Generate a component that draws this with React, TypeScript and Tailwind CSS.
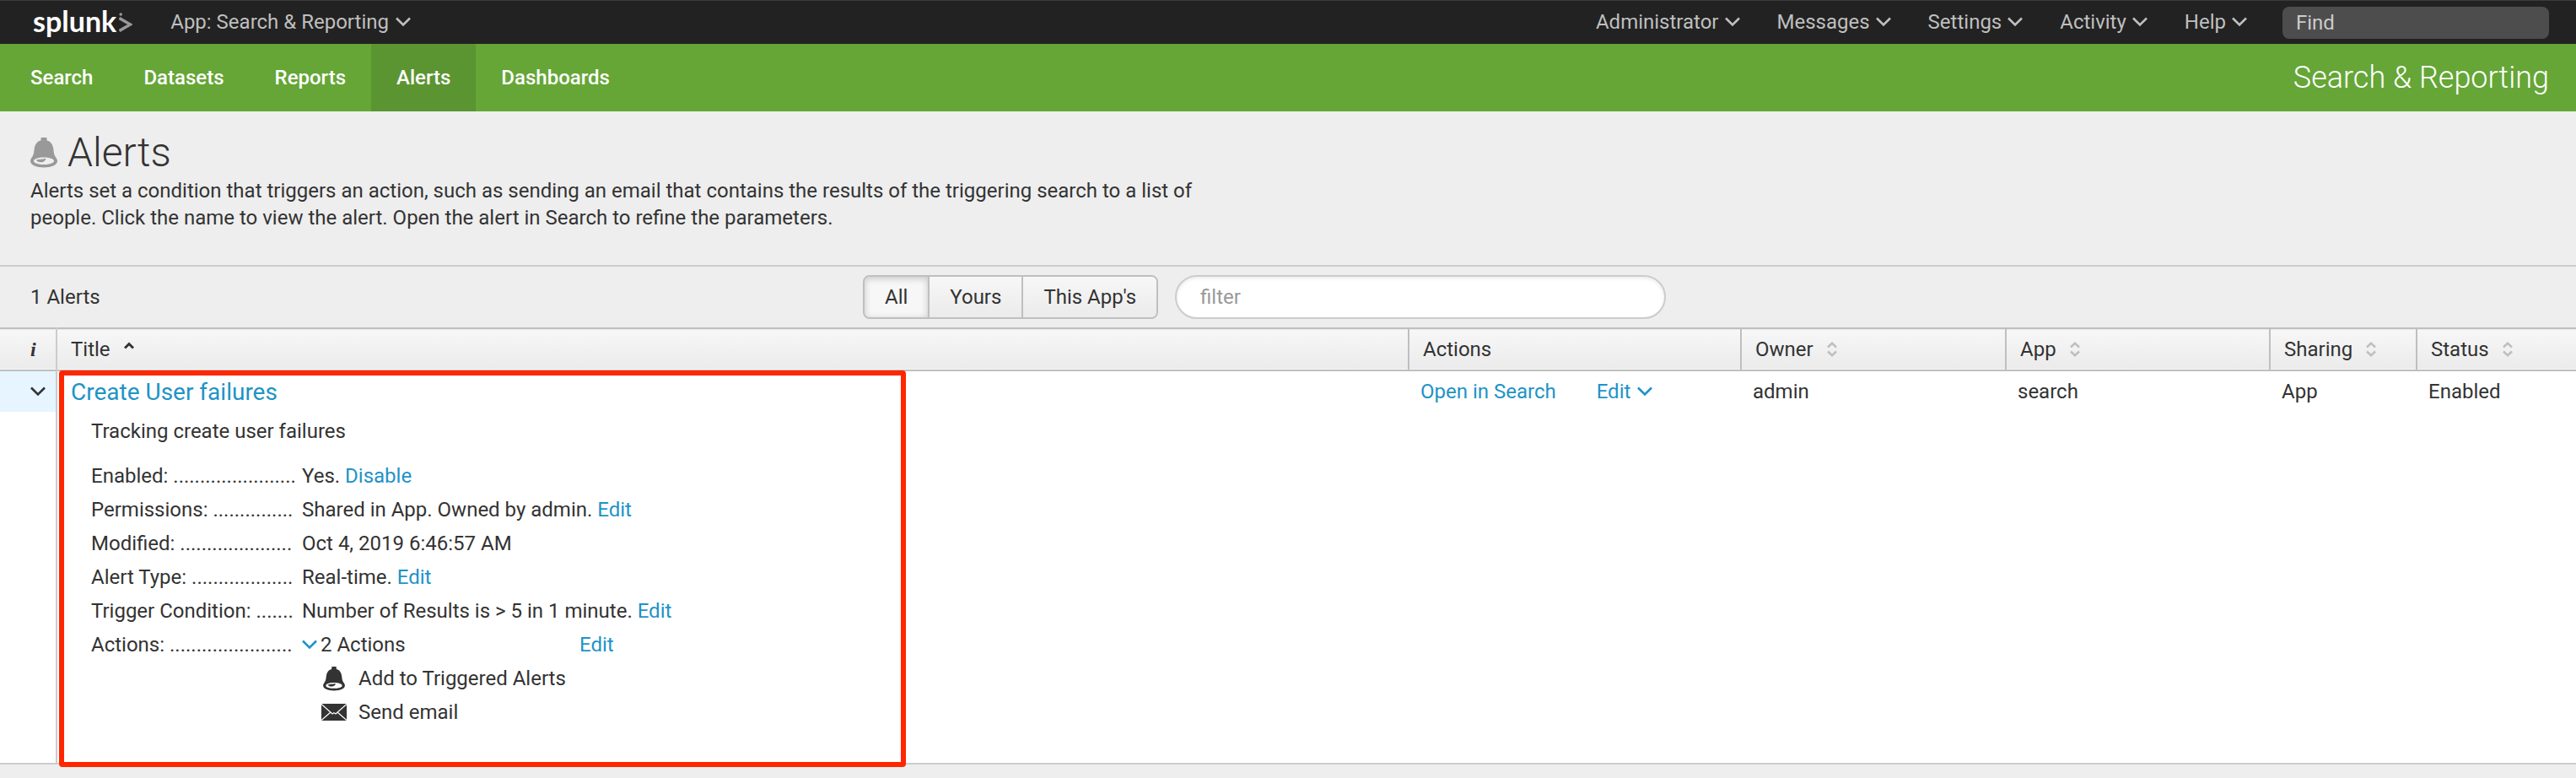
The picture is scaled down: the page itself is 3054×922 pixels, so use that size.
import React from "react";

type IconProps = { className?: string };

function Chevron({ className = "" }: IconProps) {
  return (
    <svg viewBox="0 0 18 12" className={`h-3 w-[18px] shrink-0 ${className}`} fill="none" stroke="currentColor" strokeWidth="2.6" aria-hidden="true">
      <path d="M1 1.5 L9 9.5 L17 1.5" />
    </svg>
  );
}

function SortArrows() {
  return (
    <svg viewBox="0 0 12 18" className="h-[18px] w-3 shrink-0 text-[#bfbfbf]" fill="none" stroke="currentColor" strokeWidth="2.6" aria-hidden="true">
      <path d="M1 6.5 L6 1.8 L11 6.5 M1 11.5 L6 16.2 L11 11.5" />
    </svg>
  );
}

function Bell({ className = "" }: IconProps) {
  return (
    <svg viewBox="0 0 32 36" className={`shrink-0 ${className}`} fill="currentColor" aria-hidden="true">
      <path
        fillRule="evenodd"
        d="M12.5 0.5 Q12.5 0 13.5 0 H18.5 Q19.5 0 19.5 0.5 V3.6 C24.5 4.6 26.8 9 27.4 14 C28 19 28.2 20.5 30 23.3 C31.3 25.3 32 26.2 32 28 C32 32.5 25 35.4 16 35.4 C7 35.4 0 32.5 0 28 C0 26.2 0.7 25.3 2 23.3 C3.8 20.5 4 19 4.6 14 C5.2 9 7.5 4.6 12.5 3.6 Z M16 23.5 C9.5 23.5 4 25.3 4 27.8 C4 30.3 9.5 32 16 32 C22.5 32 28 30.3 28 27.8 C28 25.3 22.5 23.5 16 23.5 Z"
      />
      <path d="M7 26.6 C10 25.6 14 26 18.3 24.8 C18.2 27.5 15.5 29.4 12.5 29.3 C9.5 29.2 7.2 28.2 7 26.6 Z" />
    </svg>
  );
}

function Envelope({ className = "" }: IconProps) {
  return (
    <svg viewBox="0 0 30 20" className={`shrink-0 ${className}`} aria-hidden="true">
      <rect width="30" height="20" fill="currentColor" />
      <path d="M0 0.5 L13 12 L15 10.8 L17 12 L30 0.5 M0 19.5 L11 10 M30 19.5 L19 10" fill="none" stroke="#fff" strokeWidth="1.3" />
    </svg>
  );
}

const navItems = ["Search", "Datasets", "Reports", "Alerts", "Dashboards"];
const menus = ["Administrator", "Messages", "Settings", "Activity", "Help"];

function TopBar() {
  return (
    <header className="flex h-[52px] items-center border-t border-[#3c3c3c] bg-[#222] pr-8 pl-[39px] text-[#bfbfbf]">
      <a href="#home" className="flex items-center gap-[3px] text-white" aria-label="splunk home">
        <span className="pb-1 font-[Lato,sans-serif] text-[34px] leading-10 font-bold">splunk</span>
        <svg viewBox="0 0 16 24" className="h-6 w-4" fill="none" stroke="#999" strokeWidth="3.4" aria-hidden="true">
          <path d="M0.5 6.5 L13.5 14 L0.5 21.5" />
          <circle cx="2.2" cy="2" r="1.8" fill="#999" stroke="none" />
        </svg>
      </a>
      <button type="button" className="ml-[45px] flex items-center gap-2 pb-0.5">
        App: Search &amp; Reporting <Chevron />
      </button>
      <div className="ml-auto flex items-center gap-11 pb-0.5">
        {menus.map((m) => (
          <button type="button" key={m} className="flex items-center gap-[7px]">
            {m} <Chevron />
          </button>
        ))}
      </div>
      <input
        aria-label="Find"
        placeholder="Find"
        className="ml-[42px] h-[38px] w-[316px] rounded-lg bg-[#4d4d4d] px-4 text-[#ccc] placeholder:text-[#ccc]"
      />
    </header>
  );
}

function NavBar() {
  return (
    <nav className="flex h-20 items-stretch bg-[#65a637] pr-8 pl-[6px] text-white">
      {navItems.map((n) => (
        <a
          key={n}
          href={`#${n.toLowerCase()}`}
          aria-current={n === "Alerts" ? "page" : undefined}
          className={`flex items-center px-[30px] font-medium ${n === "Alerts" ? "bg-[#5b9532]" : ""}`}
        >
          {n}
        </a>
      ))}
      <span className="ml-auto flex items-center text-4xl font-light">Search &amp; Reporting</span>
    </nav>
  );
}

function PageHeading() {
  return (
    <section className="h-[184px] border-b-2 border-[#ccc] px-9 pt-5">
      <div className="flex items-center gap-3">
        <Bell className="h-9 w-8 text-[#999]" />
        <h1 className="text-5xl leading-[58px] font-light">Alerts</h1>
      </div>
      <p className="max-w-[1400px] leading-8">
        Alerts set a condition that triggers an action, such as sending an email that contains the results of the
        triggering search to a list of people. Click the name to view the alert. Open the alert in Search to refine the
        parameters.
      </p>
    </section>
  );
}

function FilterBar() {
  return (
    <section className="grid h-[72px] grid-cols-[1fr_auto_1fr] items-center pr-[92px] pl-9">
      <span>1 Alerts</span>
      <div className="flex gap-5">
        <div className="flex h-[52px] overflow-hidden rounded-lg border-2 border-[#bfbfbf]">
          <button type="button" aria-pressed="true" className="bg-[#f7f7f7] px-6 shadow-[inset_0_2px_8px_rgba(0,0,0,0.2)]">
            All
          </button>
          <button type="button" className="border-l-2 border-[#bfbfbf] bg-linear-to-b from-[#f7f7f7] to-[#ebebeb] px-6">
            Yours
          </button>
          <button type="button" className="border-l-2 border-[#bfbfbf] bg-linear-to-b from-[#f7f7f7] to-[#ebebeb] px-6">
            This App's
          </button>
        </div>
        <input
          aria-label="filter"
          placeholder="filter"
          className="h-[52px] w-[582px] rounded-full border-2 border-[#ccc] bg-white px-7 shadow-[inset_0_2px_4px_rgba(0,0,0,0.08)] placeholder:text-[#999]"
        />
      </div>
      <span />
    </section>
  );
}

const link = "text-[#1e93c6]";

function Detail({ label, dots, children }: { label: string; dots: string; children: React.ReactNode }) {
  return (
    <div className="flex leading-10">
      <dt className="w-[250px] shrink-0 whitespace-nowrap">
        {label}: {dots}
      </dt>
      <dd>{children}</dd>
    </div>
  );
}

function AlertDetails() {
  return (
    <div className="relative pl-4">
      <div className="pointer-events-none absolute -top-px -bottom-[5px] left-0.5 z-10 w-[1004px] rounded-sm border-[6px] border-[#ff2600]" />
      <a href="#alert" className={`block pt-0.5 text-[28px] leading-[46px] ${link}`}>
        Create User failures
      </a>
      <div className="pl-6">
        <p className="leading-[46px]">Tracking create user failures</p>
        <dl className="pt-2.5 pb-10">
          <Detail label="Enabled" dots=".......................">
            Yes. <a href="#disable" className={link}>Disable</a>
          </Detail>
          <Detail label="Permissions" dots="...............">
            Shared in App. Owned by admin. <a href="#permissions" className={link}>Edit</a>
          </Detail>
          <Detail label="Modified" dots=".....................">Oct 4, 2019 6:46:57 AM</Detail>
          <Detail label="Alert Type" dots="...................">
            Real-time. <a href="#type" className={link}>Edit</a>
          </Detail>
          <Detail label="Trigger Condition" dots=".......">
            Number of Results is &gt; 5 in 1 minute. <a href="#trigger" className={link}>Edit</a>
          </Detail>
          <Detail label="Actions" dots=".......................">
            <div className="flex">
              <button type="button" className="flex w-[329px] items-center gap-1">
                <Chevron className={link} />2 Actions
              </button>
              <a href="#actions" className={link}>Edit</a>
            </div>
            <ul className="pl-[23px]">
              <li className="flex items-center gap-[14px]">
                <span className="flex w-[30px] justify-center"><Bell className="h-[29px] w-[26px]" /></span>
                Add to Triggered Alerts
              </li>
              <li className="flex items-center gap-[14px]">
                <Envelope className="h-5 w-[30px]" />
                Send email
              </li>
            </ul>
          </Detail>
        </dl>
      </div>
    </div>
  );
}

const sortable = ["Owner", "App", "Sharing", "Status"];

function AlertsTable() {
  return (
    <table className="w-full table-fixed border-collapse bg-white text-left">
      <colgroup>
        <col className="w-[67px]" />
        <col />
        <col className="w-[394px]" />
        <col className="w-[314px]" />
        <col className="w-[313px]" />
        <col className="w-[174px]" />
        <col className="w-[189px]" />
      </colgroup>
      <thead>
        <tr className="h-[50px] border-y-2 border-[#bfbfbf] bg-linear-to-b from-[#f7f7f7] to-[#ebebeb]">
          <th className="pl-9 font-['Liberation_Serif',serif] font-bold italic">i</th>
          <th className="border-l-2 border-[#ccc] pl-4 font-normal">
            <button type="button" className="flex items-center gap-4">
              Title
              <svg viewBox="0 0 12 18" className="h-[18px] w-3" fill="none" stroke="currentColor" strokeWidth="3" aria-hidden="true">
                <path d="M1 7.5 L6 2.5 L11 7.5" />
              </svg>
            </button>
          </th>
          <th className="border-l-2 border-[#bfbfbf] pl-4 font-normal">Actions</th>
          {sortable.map((s) => (
            <th key={s} className="border-l-2 border-[#bfbfbf] pl-4 font-normal">
              <button type="button" className="flex items-center gap-4">
                {s} <SortArrows />
              </button>
            </th>
          ))}
        </tr>
      </thead>
      <tbody>
        <tr className="border-b-2 border-[#ccc] align-top leading-[46px]">
          <td className="p-0">
            <button type="button" aria-label="Collapse row" aria-expanded="true" className="flex h-12 w-full items-center bg-[#e6f5ff] pl-9">
              <Chevron />
            </button>
          </td>
          <td className="border-l-2 border-[#ccc] p-0">
            <AlertDetails />
          </td>
          <td className="pt-px pl-[14px]">
            <div className="flex gap-12">
              <a href="#open" className={link}>Open in Search</a>
              <button type="button" className={`flex items-center gap-2 ${link}`}>
                Edit <Chevron />
              </button>
            </div>
          </td>
          <td className="pt-px pl-[14px]">admin</td>
          <td className="pt-px pl-[14px]">search</td>
          <td className="pt-px pl-[14px]">App</td>
          <td className="pt-px pl-[14px]">Enabled</td>
        </tr>
      </tbody>
    </table>
  );
}

export default function App() {
  return (
    <div className="min-h-screen bg-[#eee] font-[Roboto,sans-serif] text-2xl text-[#333]">
      <TopBar />
      <NavBar />
      <main>
        <PageHeading />
        <FilterBar />
        <AlertsTable />
      </main>
    </div>
  );
}
